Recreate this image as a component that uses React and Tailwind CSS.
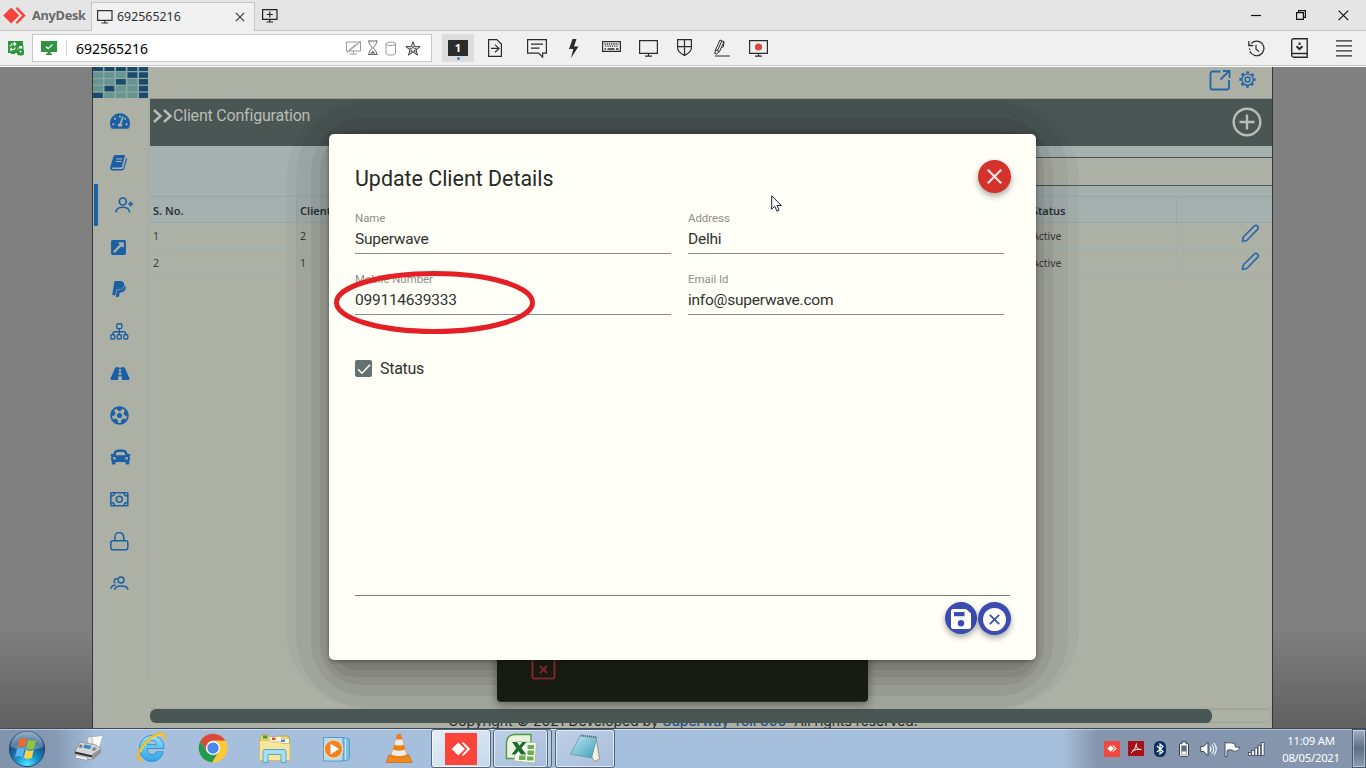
import React from "react";
import {
  FaTachometerAlt,
  FaPaypal,
  FaFutbol,
  FaRoad,
  FaCar,
  FaExternalLinkSquareAlt,
} from "react-icons/fa";

/* ---------- generic helpers ---------- */

function Line({ w = 20, h = 20, sw = 1.2, className = "", children, box }) {
  return (
    <svg
      width={w}
      height={h}
      viewBox={box || `0 0 ${w} ${h}`}
      fill="none"
      stroke="currentColor"
      strokeWidth={sw}
      className={"block shrink-0 " + className}
    >
      {children}
    </svg>
  );
}

function AnyMark({ w, h, className = "" }) {
  return (
    <svg width={w} height={h} viewBox="0 0 24 18" className={"block shrink-0 " + className} fill="currentColor">
      <path d="M8.5 .5 17 9l-8.500 8.500L0 9z" />
      <path d="M13.200 1.600 14.800 0 23.800 9l-9 9-1.600-1.600L20 9z" />
    </svg>
  );
}

/* ---------- title bar ---------- */

function TitleBar() {
  return (
    <div className="flex h-[31px] shrink-0 border-b border-[#c6c6c6] bg-[#e5e5e5] font-['Noto_Sans',sans-serif]">
      <div className="flex w-[91px] shrink-0 items-center pl-[3px]">
        <AnyMark w={23} h={17} className="text-[#f6423a]" />
        <span className="ml-[6px] whitespace-nowrap pt-[2px] text-[12.800px] font-bold tracking-[-0.3px] text-[#6a6a6a]">AnyDesk</span>
      </div>
      <div className="flex h-[29px] w-[164px] shrink-0 translate-y-[2px] items-center border border-b-0 border-[#c6c6c6] bg-[#f0f0f0] pl-[5px] text-[#333]">
        <Line w={16} h={14} sw={1.2}>
          <path d="M.6.6h14.400v9.800H.6zM7.800 10.400v2.600M4.500 13h6.600" />
        </Line>
        <span className="ml-1 text-[12.400px]">692565216</span>
        <Line w={10} h={10} sw={1.1} className="ml-[54px]">
          <path d="M.8.800l8.400 8.400M9.200.8.800 9.200" />
        </Line>
      </div>
      <div className="flex w-[30px] items-center justify-center pt-[2px] text-[#222]">
        <Line w={16} h={14} sw={1.2}>
          <path d="M.6.6h14.400v9.800H.6zM7.800 10.400v2.600M4.500 13h6.600M7.800 2.500v6M4.800 5.500h6" />
        </Line>
      </div>
      <div className="flex flex-1 items-center justify-end pr-[17px] text-[#111]">
        <Line w={10} h={10} sw={1.2}>
          <path d="M0 5.500h10" />
        </Line>
        <Line w={10} h={10} sw={1.2} className="ml-[35px]">
          <path d="M.6 2.600h6.800v6.800H.6zM2.600 2.600V.6h6.800v6.800h-2" />
        </Line>
        <Line w={11} h={11} sw={1.2} className="ml-[32px]">
          <path d="M.6.600l9.600 9.600M10.200.6.600 10.200" />
        </Line>
      </div>
    </div>
  );
}

/* ---------- toolbar ---------- */

function AddressBox() {
  return (
    <div className="ml-[8px] flex h-7 w-[400px] shrink-0 items-center border border-[#c9c9c9] bg-white pl-2">
      <svg width="16" height="14" viewBox="0 0 16 14" className="block">
        <path fill="#2f9340" d="M0 0h16v11H9.500v1.500H11V14H5v-1.500h1.500V11H0z" />
        <path d="M5 5.500l2.200 2.200L11.500 3.500" fill="none" stroke="#fff" strokeWidth="1.200" />
      </svg>
      <div className="ml-[9px] h-4 w-px bg-[#d0d0d0]" />
      <span className="ml-[9px] text-[14px] tracking-[-0.02px] text-black">692565216</span>
      <div className="ml-auto flex items-center pr-[10px] text-[#999]">
        <Line w={16} h={14} sw={1}>
          <path d="M.5 1h14v9H.5zM7.500 10v2.500M4 13h7M1 11.500 15 .5M3 9l8-6.500" />
        </Line>
        <Line w={12} h={16} sw={1} className="ml-[5px] text-[#666]">
          <path d="M1 1h9.600M1 14.500h9.600M2 1C2 5.500 5 6 5 7.800s-3 2-3 6.700M9.600 1C9.600 5.500 6.600 6 6.600 7.800s3 2 3 6.700" />
          <path d="M3 13.500h5.600l-2.800-2.500z" fill="currentColor" stroke="none" />
        </Line>
        <Line w={12} h={15} sw={1} className="ml-[6px]">
          <path d="M1 2.800v9.500c0 2.400 9.500 2.400 9.500 0V2.800M1 2.800c0-2.400 9.500-2.400 9.500 0s-9.500 2.400-9.500 0z" />
        </Line>
        <Line w={16} h={15} sw={1} className="ml-[8px] text-[#333]">
          <path d="M8 .8l1.800 4.900h5.300l-4.200 3.200 1.600 5.200L8 10.900l-4.500 3.200 1.600-5.200L.9 5.700h5.300z" />
          <path d="M8 5l.9 2.400h2.400L9.400 9l.8 2.300L8 9.800l-2.200 1.500.8-2.300-1.900-1.600h2.400z" strokeWidth=".7" />
        </Line>
      </div>
    </div>
  );
}

function Toolbar() {
  const slot = "flex shrink-0 items-center justify-center ";
  return (
    <div className="flex h-[35px] shrink-0 items-center border-b border-[#c6c6c6] bg-[#f0f0f0] font-['Noto_Sans',sans-serif] text-[#2b2b2b]">
      <svg width="16" height="15" viewBox="0 0 16 15" className="ml-2 block shrink-0">
        <path fill="#2f9340" d="M0 0h15v5h-3.500L9 7.500V12H7v1H3v-1H0z" />
        <path d="M2 5.500 4 3h3.500M6 1.200 7.800 3 6 4.800M7.500 6.500 6 8.500H2.500M4 6.800 2.300 8.500 4 10.200" fill="none" stroke="#fff" strokeWidth="1.100" />
        <path d="M10 8V6.500a2.500 2.500 0 0 1 5 0V8" fill="none" stroke="#2f9340" strokeWidth="1.200" />
        <rect x="9" y="7.500" width="7" height="7" rx="2.500" fill="#2f9340" />
        <circle cx="12.500" cy="10.500" r="1" fill="#fff" />
      </svg>
      <AddressBox />
      <div className="ml-[10px] flex h-7 w-8 shrink-0 flex-col items-center bg-[#dcdcdc] pt-[6px]">
        <div className="flex h-4 w-5 items-center justify-center bg-[#2b2b2b] text-[11px] font-bold text-white">1</div>
        <div className="mt-[1px] size-[3px] rounded-full bg-[#3c83c8]" />
      </div>
      <div className={slot + "ml-[2px] w-[38px]"}>
        <Line w={14} h={18} sw={1.200}>
          <path d="M.6.6h8.200L13.400 5v12.400H.6zM3 9.400h7.600M7 5.600l4 3.800-4 3.800" />
        </Line>
      </div>
      <div className={slot + "w-[46px]"}>
        <Line w={20} h={19} sw={1.200}>
          <path d="M.6.6h18.800v13.600h-3.800v4l-4-4H.6zM4 5.200h12M4 9.200h8.500" />
        </Line>
      </div>
      <div className={slot + "w-[28px]"}>
        <svg width="10" height="19" viewBox="0 0 10 19" className="block" fill="currentColor">
          <path d="M3.500 0H7.500L5 7.500H9.500L2 19 4.300 10H0z" />
        </svg>
      </div>
      <div className={slot + "w-[46px] pb-[3px]"}>
        <Line w={19} h={11} sw={1.200}>
          <path d="M.6.6h17.800v9.800H.6z" />
          <path d="M2.500 3h14M3.300 5.200h13" strokeDasharray="1.200 1" strokeWidth="1.300" />
          <path d="M2.500 8h1.500M5.500 8h7M14 8h2.500" strokeWidth="1.300" />
        </Line>
      </div>
      <div className={slot + "w-[28px]"}>
        <Line w={19} h={17} sw={1.200}>
          <path d="M.6.6h17.800v12.800H.6zM9.500 13.400v2.800M6 16.200h7" />
        </Line>
      </div>
      <div className={slot + "w-[44px] pb-[1px]"}>
        <Line w={15} h={17} sw={1.200}>
          <path d="M.6.600h13.800v8.400c0 4-4.500 6.200-6.900 7.400C5.100 15.200.6 13 .6 9zM7.500.6v15.400M.6 7.600h13.800" />
        </Line>
      </div>
      <div className={slot + "w-[32px]"}>
        <Line w={16} h={18} sw={1}>
          <path d="M.8 14.500 1.500 11 6 1l4 1.800L5.500 12.500 2.500 15zM1.500 11l4 1.500M7.800 2 3.500 11.500M10 2.800l-.6 5-1 .8M1 17h15" />
        </Line>
      </div>
      <div className={slot + "w-[40px]"}>
        <Line w={19} h={17} sw={1.200}>
          <path d="M.6.6h17.800v12.800H.6zM9.500 13.400v2.800M6 16.200h7" />
          <circle cx="9.500" cy="7" r="3.600" fill="#d9483f" stroke="none" />
        </Line>
      </div>
      <div className="ml-auto flex items-center pr-[14px]">
        <Line w={17} h={17} sw={1.200}>
          <path d="M3.500 3.200A7.300 7.300 0 1 1 2 11.500" />
          <path d="M.8 1v4.600h4.600M8 4.800v4.400l3 2.300" />
          <path d="M1.200 5.600 3.500 3.200M1.400 8.500 2 11.500" strokeDasharray="1.500 1.200" />
        </Line>
        <Line w={17} h={20} sw={1.400} className="ml-[26px]">
          <path d="M2.700.7h13.500v18.500H2.700a2 2 0 0 1-2-2V2.700a2 2 0 0 1 2-2zM1 15.500h15.200" />
          <path d="M8.500 4.500v2.500M5.500 8.300l3 2.800 3-2.800" strokeWidth="2" />
        </Line>
        <Line w={16} h={17} sw={1.100} className="ml-[28px]">
          <path d="M0 .9h16M0 5.900h16M0 10.900h16M0 15.900h16" />
        </Line>
      </div>
    </div>
  );
}

/* ---------- remote page: sidebar ---------- */

function Logo() {
  const rows = ["ddddd", "tttdd", "ttdtd", "tdttd", "dtttd"];
  return (
    <svg width="55" height="31" viewBox="0 0 55 31" className="mb-px block shrink-0">
      <rect width="55" height="31" fill="#8fa5a0" />
      {rows.map((r, y) =>
        r.split("").map((c, x) => (
          <rect
            key={x + "-" + y}
            x={x * 11.500}
            y={y === 0 ? 0 : 5.300 + (y - 1) * 6.800}
            width={9.800}
            height={y === 0 ? 4 : 5.500}
            fill={c === "d" ? "#184a6e" : "#669490"}
          />
        ))
      )}
    </svg>
  );
}

const sideIcons = [
  <FaTachometerAlt key="a" className="block h-[18px] w-[20px]" />,
  <svg key="b" width="18" height="16" viewBox="0 0 18 16" className="block">
    <path fill="currentColor" d="M5.500 0H14c.8 0 1.100.6.900 1.300L12 11.500c-.2.700-.8 1.100-1.500 1.100H3c-1.200 0-1.200 1.500 0 1.500h8.800c.9 0 1.300-.3 1.500-1L16 3c.8.400 1.100 1 .9 1.800l-2.700 9c-.3 1-1.200 1.700-2.300 1.700H2.700C.8 15.500-.3 13.700.3 12L3.200 2C3.600.8 4.300 0 5.500 0z" />
    <path d="M6.500 4h6M5.800 6.500h6" stroke="#adb0a5" strokeWidth="1.100" />
  </svg>,
  <Line key="c" w={19} h={16} sw={1.700}>
    <circle cx="7.800" cy="4.500" r="3.500" />
    <path d="M.9 15.500c.6-7 13.200-7 13.800 0M15.600 4.500v5M13.100 7h5" />
  </Line>,
  <FaExternalLinkSquareAlt key="d" className="block size-[17px]" />,
  <FaPaypal key="e" className="block size-[18px]" />,
  <Line key="f" w={19} h={17} sw={1.400}>
    <rect x="6.800" y=".8" width="5" height="4.800" rx="1" />
    <rect x=".8" y="11.700" width="4" height="4.300" rx="1" />
    <rect x="7.300" y="11.700" width="4" height="4.300" rx="1" />
    <rect x="13.800" y="11.700" width="4" height="4.300" rx="1" />
    <path d="M9.300 5.600v6M2.800 11.700c0-2.500.6-3 2-3h9c1.400 0 2 .5 2 3" />
  </Line>,
  <FaRoad key="g" className="block h-[17px] w-[20px]" />,
  <FaFutbol key="h" className="block size-[19px]" />,
  <FaCar key="i" className="block h-[20px] w-[21px]" />,
  <Line key="j" w={19} h={15} sw={1.500}>
    <rect x=".8" y=".8" width="17" height="13" rx=".8" />
    <circle cx="9.300" cy="7.300" r="3" />
    <path d="M4.500 1c0 2-1.500 3-3.500 3M14 1c0 2 1.500 3 3.500 3M4.500 13.600c0-2-1.500-3-3.500-3M14 13.600c0-2 1.500-3 3.500-3" />
  </Line>,
  <Line key="k" w={19} h={19} sw={1.500}>
    <rect x=".8" y="8.800" width="17" height="9" rx="2" />
    <path d="M4.900 8.800V5a4.400 4.400 0 0 1 8.800 0v3.800" />
  </Line>,
  <Line key="l" w={19} h={15} sw={1.500}>
    <circle cx="11" cy="4" r="3" />
    <path d="M4.600 13.800c.6-5 12.800-5 13.400 0M7 3C4.500 1.800 2.800 6 5.500 7M5.500 9C2.800 9.300 1.200 10.500.8 12.800" />
  </Line>,
];

function Sidebar() {
  return (
    <div className="flex w-[57px] shrink-0 flex-col">
      <Logo />
      <div className="flex h-[579px] w-[56px] flex-col border-r border-[#a0aba7] pt-[1px] text-[#1b60a4]">
        {sideIcons.map((icon, i) => (
          <div
            key={i}
            className={
              "flex h-[42.050px] shrink-0 items-center " +
              (i === 2 ? "ml-px border-l-4 border-[#1c63a5] pl-[17px]" : "pl-[17px]")
            }
          >
            {icon}
          </div>
        ))}
      </div>
    </div>
  );
}

/* ---------- remote page: table ---------- */

function Pencil() {
  return (
    <Line w={19} h={19} sw={1.700} className="text-[#2c6aa8]">
      <path d="M1.500 17.500l.8-4.500L13.200 2.200c2.400-2 5.200.7 3.300 3.200L5.800 16.500z" strokeLinejoin="round" />
    </Line>
  );
}

function Row({ a, b }) {
  return (
    <div className="flex h-[27.500px] shrink-0 border-b border-[#a0b0b1] text-[#3a3c3e]">
      <div className="flex w-[146px] items-center pl-[3px] pt-[2px]">{a}</div>
      <div className="flex w-[736px] items-center border-l border-[#a0b0b1] pl-[3px] pt-[2px]">{b}</div>
      <div className="flex w-[145px] items-center border-r border-[#a0b0b1] pt-[2px]">Active</div>
      <div className="flex flex-1 items-center justify-end pr-[12px] pb-[4px]">
        <Pencil />
      </div>
    </div>
  );
}

function Page() {
  return (
    <div className="flex w-[1181px] shrink-0 overflow-hidden border-x border-[#33363a] bg-[#adb0a5]">
      <Sidebar />
      <div className="flex min-w-0 flex-1 flex-col">
        <div className="flex h-[32px] shrink-0 items-start justify-end border-b border-[#8f9a93] pr-[16px] pt-[3px] text-[#2566a8]">
          <Line w={22} h={21} sw={1.800}>
            <path d="M11.500 1.500h-8a2 2 0 0 0-2 2v14a2 2 0 0 0 2 2h14.500a2 2 0 0 0 2-2V10M11.500 9.500 20 1.200M14 1h6.500v7" />
          </Line>
          <svg width="17" height="17" viewBox="-12 -12 24 24" fill="none" stroke="currentColor" className="ml-[8px] mt-[1px] block shrink-0">
            <circle r="3.400" strokeWidth="2.200" />
            <circle r="8" strokeWidth="2" />
            <circle r="10" strokeWidth="3" strokeDasharray="3.900 3.954" strokeDashoffset="1.950" />
          </svg>
        </div>
        <div className="flex h-[47px] shrink-0 items-start justify-between bg-[#4a5653] pr-[10px] font-['Roboto',sans-serif] text-[#b9bdb6]">
          <div className="flex items-center pl-[3px] pt-[4px]">
            <Line w={20} h={14} sw={2.500}>
              <path d="M1 1l6.500 6L1 13M11 1l6.500 6-6.500 6" />
            </Line>
            <span className="whitespace-nowrap text-[16px] leading-[25px] tracking-[-0.2px]">Client Configuration</span>
          </div>
          <Line w={30} h={30} sw={2.400} className="mt-[8px]">
            <circle cx="15" cy="15" r="13.300" />
            <path d="M15 7.500v15M7.500 15h15" />
          </Line>
        </div>
        <div className="flex h-[50px] shrink-0 items-start justify-end bg-[#a5b1af] pt-[11px]">
          <div className="h-[29px] w-[400px] border-y border-[#4b5654] bg-[#adb0a5]" />
        </div>
        <div className="font-['Noto_Sans',sans-serif] text-[10.500px]">
          <div className="flex h-[26.500px] border-y border-[#98a8a8] bg-[#a5b1af] text-[11px] font-semibold text-[#2d3337]">
            <div className="flex w-[146px] items-center pl-[3px] pt-[3px]">S. No.</div>
            <div className="flex w-[736px] items-center border-l border-[#98a8a8] pl-[3px] pt-[3px]">Client Id</div>
            <div className="flex w-[145px] items-center border-r border-[#98a8a8] pt-[3px] tracking-[-0.1px]">Status</div>
          </div>
          <Row a="1" b="2" />
          <Row a="2" b="1" />
        </div>
        <div className="relative mt-auto h-[20px] shrink-0 border-t border-[#a2a69b]">
          <div className="absolute left-[298px] top-[1px] whitespace-nowrap font-['Inter',sans-serif] text-[13.900px] leading-[22px] text-[#25282b]">
            Copyright © 2021 Developed by <span className="font-medium text-[#24508f]">Superway Toll 360</span>
            &nbsp; All rights reserved.
          </div>
          <div className="relative h-[14px] rounded-full border border-[#a0a497] bg-[#adb0a5]">
            <div className="-ml-px -mt-px h-[14px] w-[1062px] rounded-[6px] bg-[#4a5653]" />
          </div>
        </div>
      </div>
    </div>
  );
}

/* ---------- modal ---------- */

function Field({ label, value }) {
  return (
    <div className="flex h-[61px] w-[316px] flex-col">
      <span className="translate-y-px text-[11.400px] leading-[16px] text-[#8c8f87]">{label}</span>
      <div className="flex h-[29px] items-center border-b border-[#8b8d87] pt-[2px] text-[15.500px] tracking-[-0.24px] text-[#30332f]">{value}</div>
    </div>
  );
}

function Modal() {
  return (
    <>
      <div className="absolute left-[286px] top-[99px] h-[610px] w-[793px] rounded-[80px] bg-black/[0.025]" />
      <div className="absolute left-[296px] top-[103px] h-[605px] w-[772px] rounded-[72px] bg-black/[0.04]" />
      <div className="absolute left-[311px] top-[118px] h-[578px] w-[742px] rounded-[54px] bg-black/[0.055]" />
      <div className="absolute left-[320px] top-[130px] h-[555px] w-[724px] rounded-[40px] bg-black/[0.06]" />
      <div className="absolute left-[329px] top-[150px] h-[527px] w-[707px] rounded-[24px] bg-black/[0.06]" />
      <div className="absolute left-[335px] top-[150px] h-[520px] w-[695px] rounded-[20px] bg-black/[0.07]" />
      <div className="absolute left-[497px] top-[640px] flex h-[62px] w-[371px] items-end rounded-[4px] border-b border-[#2b2e25] bg-[#181b12] pb-[21px] pl-[34px] shadow-[0_2px_8px_1px_rgba(0,0,0,0.35)]">
        <Line w={25} h={20} sw={2} className="text-[#7a2733]">
          <rect x="1.500" y="-2" width="22" height="20.500" rx="1.500" />
          <path d="M9 6l7 7M16 6l-7 7" />
        </Line>
      </div>
      <div className="absolute left-[329px] top-[134px] flex h-[526px] w-[707px] flex-col rounded-[5px] bg-[#fffff8] px-[26px] font-['Roboto',sans-serif] shadow-[0_1px_4px_rgba(0,0,0,0.4)]">
        <div className="flex h-[75px] shrink-0 items-start justify-between pt-[26px]">
          <h1 className="text-[21.400px] leading-[37px] text-[#262925]">Update Client Details</h1>
          <div className="-mr-px flex size-[33px] items-center justify-center rounded-full bg-[#d4322c] text-[#fbe3df] shadow-[0_3px_6px_rgba(0,0,0,0.35)]">
            <Line w={15} h={15} sw={2.200}>
              <path d="M.8.8l13.400 13.400M14.200.8.8 14.200" />
            </Line>
          </div>
        </div>
        <div className="grid grid-cols-[316px_316px] gap-x-[17px]">
          <Field label="Name" value="Superwave" />
          <Field label="Address" value="Delhi" />
          <Field label="Mobile Number" value="099114639333" />
          <Field label="Email Id" value="info@superwave.com" />
        </div>
        <div className="mt-[25px] flex h-[26px] items-center">
          <div className="mb-px flex size-[17px] items-center justify-center rounded-[2px] bg-[#657170] text-[#fffff8]">
            <Line w={14} h={12} sw={1.600}>
              <path d="M1 6.200l4 4L13 1.800" />
            </Line>
          </div>
          <span className="ml-2 text-[16px] tracking-[-0.3px] text-[#30332f]">Status</span>
        </div>
        <div className="mt-[213px] flex items-start justify-end gap-[1px] border-t border-[#7d7f7b] pt-[6px]">
          <div className="flex size-[32px] items-center justify-center rounded-full bg-[#3b4baf] shadow-[0_3px_6px_rgba(0,0,0,0.35)]">
            <svg width="22" height="22" viewBox="0 0 22 22" className="block translate-y-[1px]">
              <path fill="#fffff8" fillRule="evenodd" d="M3 1h13l5 4.500V19a2 2 0 0 1-2 2H3a2 2 0 0 1-2-2V3a2 2 0 0 1 2-2zM4 4v4.200h10.500V4zM11 12a3.200 3.200 0 1 0 0 6.400 3.200 3.200 0 0 0 0-6.400z" />
            </svg>
          </div>
          <div className="-mr-px flex size-[33px] items-center justify-center rounded-full bg-[#3b4baf] text-[#3b4baf] shadow-[0_3px_6px_rgba(0,0,0,0.35)]">
            <div className="flex size-[23px] translate-y-[1px] items-center justify-center rounded-full bg-[#fffff8]">
              <Line w={11} h={11} sw={1.700}>
                <path d="M.8.8l9.400 9.400M10.200.8.8 10.200" />
              </Line>
            </div>
          </div>
        </div>
      </div>
      <svg width="202" height="65" viewBox="0 0 202 65" className="absolute left-[334px] top-[270px]" fill="none">
        <ellipse cx="100.500" cy="32.500" rx="98" ry="29" stroke="#e41f26" strokeWidth="5" />
      </svg>
      <svg width="11" height="17" viewBox="0 0 11 17" className="absolute left-[771px] top-[195px]">
        <path d="M.7.800v13.400l3.100-2.900 2.100 4.800 2.200-1-2.100-4.600h4.300z" fill="#fff" stroke="#201f35" strokeWidth="1" />
      </svg>
    </>
  );
}

/* ---------- taskbar ---------- */

function Orb() {
  return (
    <svg width="38" height="38" viewBox="0 0 38 38" className="block">
      <defs>
        <radialGradient id="orb" cx=".5" cy=".95" r=".95">
          <stop offset="0" stopColor="#4fe6ff" />
          <stop offset=".35" stopColor="#1590c8" />
          <stop offset=".7" stopColor="#1a4f80" />
          <stop offset="1" stopColor="#6f97b8" />
        </radialGradient>
      </defs>
      <circle cx="19" cy="19" r="17.600" fill="url(#orb)" stroke="#26476a" strokeWidth="1" />
      <path d="M3 17A16 16 0 0 1 35 17C25 21 13 21 3 17z" fill="#fff" opacity=".28" />
      <path d="M11.500 9.200c3-1.700 5.300-1.200 7.500 0l-2 8.300c-2.400-1.400-4.700-1.500-7.600 0z" fill="#ee6a2c" />
      <path d="M20.200 9.700c2.600 1.400 5.200 1.500 8 .2l-2 8.200c-2.800 1.500-5.300 1.300-8 0z" fill="#8fc640" />
      <path d="M9 19c3-1.600 5.300-1.200 7.500.1l-2 8c-2.300-1.300-4.600-1.400-7.500 0z" fill="#5bb4ee" />
      <path d="M17.800 19.700c2.600 1.300 5 1.500 8 .1l-2 8c-2.900 1.400-5.500 1.200-8 0z" fill="#fdd243" />
    </svg>
  );
}

function Fax() {
  return (
    <svg width="32" height="28" viewBox="0 0 32 28" className="block">
      <path d="M17 3 30 1.500 26 15 14 13z" fill="#fafafa" stroke="#9d9d9d" strokeWidth=".6" />
      <path d="M7 8l16 3 4.500 3v5L19 26 2 22V17.500z" fill="#d3d7da" stroke="#777" strokeWidth=".6" />
      <path d="M19 20.500l8.500-6v4.500L19 26z" fill="#8d9398" />
      <path d="M2 17.500l17 3.700v2.300L2 19.800z" fill="#333" />
      <path d="M3 21l12 2.700-1 2.600-12-2.600z" fill="#f8f8f8" stroke="#777" strokeWidth=".5" />
      <path d="M11.500 10.500l7 1.300-1.500 3.500-7-1.600z" fill="#3d86c6" />
      <path d="M14.500 3.500l4-1.500 1.500 8-6-1z" fill="#e6e6e6" stroke="#888" strokeWidth=".5" />
      <path d="M7 10.500l2.500.6-1.200 3-2.500-.8z" fill="#6d7378" />
      <path d="M20.500 12.700l3.500 1.500-2.300 3-3.200-1z" fill="#8b9095" />
    </svg>
  );
}

function IE() {
  return (
    <svg width="32" height="32" viewBox="0 0 32 32" className="block">
      <defs>
        <linearGradient id="ie" x1="0" y1="0" x2="0" y2="1">
          <stop offset="0" stopColor="#8fe0fb" />
          <stop offset="1" stopColor="#2fa4e4" />
        </linearGradient>
      </defs>
      <path
        d="M29 17.500H12.200c.2 4 2.200 6 5 6 2 0 3.500-1 4.200-2.700h6.900C27 26.800 22.500 30.500 17 30.500 9.800 30.500 4.500 25 4.500 17.300S10 4.500 17 4.500s12.200 5.500 12 13zM12.300 13.700h9.200c-.2-2.900-1.900-4.400-4.500-4.400s-4.300 1.600-4.700 4.400z"
        fill="url(#ie)"
        stroke="#2c88c9"
        strokeWidth=".8"
      />
      <path d="M29.500 8.500c.8-3.200 0-5.500-2.500-5.800C20 1.800 8 12 4 21.500c-2 5-.8 8.500 3.500 7.200" fill="none" stroke="#e9bd24" strokeWidth="2.600" />
      <path d="M28.500 5c-3-4-17 4-23 16" fill="none" stroke="#fbe37a" strokeWidth=".9" />
    </svg>
  );
}

function ChromeIcon() {
  return (
    <svg width="30" height="30" viewBox="0 0 48 48" className="block">
      <circle cx="24" cy="24" r="23" fill="#fbc938" />
      <path d="M24 24 14 29.800 4.100 12.500A23 23 0 0 0 22.500 47L32.500 29.800z" fill="#219a55" />
      <path d="M24 24V12.500h19.900A23 23 0 0 0 4.100 12.500L14 29.800z" fill="#d94a3d" />
      <path d="M34 29.800 24 47a23 23 0 0 0 19.900-34.500H24z" fill="#fbc938" />
      <circle cx="24" cy="24" r="11.500" fill="#f5f5f5" />
      <circle cx="24" cy="24" r="9" fill="#4688ec" />
    </svg>
  );
}

function Explorer() {
  return (
    <svg width="34" height="31" viewBox="0 0 34 31" className="block">
      <path d="M2 4 4 2h7l1.500 2H18l1.500-1H30l1.500 3v21H2z" fill="#ecd376" stroke="#c2a247" strokeWidth=".8" />
      <path d="M5 2.500h4.500v3H5z" fill="#3d9e3e" />
      <path d="M12 4h11v5H12zM22 6h9v4h-9z" fill="#f6f4ea" />
      <path d="M14 4.500h3.500v2.500H14z" fill="#d7502d" />
      <path d="M23 6.500h4v2.500h-4z" fill="#4a90d4" />
      <path d="M1.500 7.500h9.500l1.500 1.500H22l1.500 1.500H32v17H1.500z" fill="#f6e69c" stroke="#d2b65a" strokeWidth=".8" />
      <path d="M5 29.500v-11a2 2 0 0 1 2-2h19a2 2 0 0 1 2 2v11h-5v-8H10v8z" fill="#a9def2" stroke="#5ba7cb" strokeWidth="1" />
    </svg>
  );
}

function Player() {
  return (
    <svg width="30" height="28" viewBox="0 0 30 28" className="block">
      <path d="M6 3h18.500l3 2v18L25 25.500H6z" fill="#7cc0e6" stroke="#3c86b8" strokeWidth=".7" />
      <path d="M1.500 2.500h19.500V26H1.500z" fill="#b3dcf2" stroke="#4890be" strokeWidth=".8" />
      <path d="M23.500 3.500v22" stroke="#d5eefa" />
      <circle cx="11.500" cy="14" r="9.200" fill="#f08224" stroke="#f7d7ae" strokeWidth="1.300" />
      <path d="M8.500 8.500v11l8.500-5.500z" fill="#fff" />
    </svg>
  );
}

function Cone() {
  return (
    <svg width="28" height="31" viewBox="0 0 28 31" className="block">
      <path d="M4 22h20l3 7.500H1z" fill="#ee8a1e" stroke="#c8670e" strokeWidth=".7" />
      <path d="M12 1.500c1-1 3-1 4 0L22.500 24c-3 2.500-14 2.500-17 0z" fill="#ee8012" />
      <path d="M10.800 6.500h6.400l1.500 5.200c-2 1-7.400 1-9.400 0zM8 16.500c3 1.500 9 1.500 12 0l1.500 5c-4 2-11 2-15 0z" fill="#ececec" />
    </svg>
  );
}

function Excel() {
  return (
    <svg width="32" height="31" viewBox="0 0 32 31" className="block">
      <path d="M9 1.500h17v24H1.500V9C2 4.500 4.500 2 9 1.500z" fill="#e9f4e0" stroke="#4f9a3d" strokeWidth="1.400" />
      <path d="M11 8.500l20.500 1L30 30 9 28z" fill="#f7fbf3" stroke="#9cbd8d" strokeWidth=".8" />
      <path d="M22.500 12h6.500v4h-6.500zM22.500 17.500H29v4.500h-6.500zM22 23.500h6.500v4H22zM14 22.500h6.500v4.500H14z" fill="#6eae50" />
      <path d="M7 9h5l2.500 3.500L17.500 9h4l-5 6 4.800 6.500H16l-2.500-3.600-3 3.600H6.500l5-6.200z" fill="#1f6b2e" />
    </svg>
  );
}

function Notepad() {
  return (
    <svg width="32" height="31" viewBox="0 0 32 31" className="block">
      <defs>
        <linearGradient id="np" x1="0" y1="0" x2="1" y2="1">
          <stop offset="0" stopColor="#c5eaf2" />
          <stop offset="1" stopColor="#3c9dba" />
        </linearGradient>
      </defs>
      <path d="M27 4l3.500 22-5 2.500-3-5z" fill="#f3f0e2" stroke="#8a8873" strokeWidth=".8" />
      <path d="M11.500 2.500 28 4.500l-5.500 20.500L1.500 21z" fill="url(#np)" stroke="#5393a6" strokeWidth=".7" />
      <path d="M12 2.500 28 4.300" stroke="#667" strokeWidth="2" strokeDasharray="1 1" />
    </svg>
  );
}

function TaskButton({ children, active, className }) {
  return (
    <div
      className={
        "flex h-[39px] items-center justify-center rounded-[3px] border border-[#52637c] shadow-[inset_0_0_0_1px_rgba(255,255,255,0.65)] " +
        (active ? "bg-linear-to-br from-[#e6eef8] to-[#c6d7ec] " : "bg-linear-to-br from-[#bfd0e8] to-[#a9bedb] ") +
        className
      }
    >
      {children}
    </div>
  );
}

function Tray() {
  return (
    <div className="ml-auto flex items-center text-white">
      <div className="flex w-6 justify-center">
        <div className="flex size-4 items-center justify-center bg-[#f24840]">
          <AnyMark w={10} h={7} />
        </div>
      </div>
      <div className="flex w-6 justify-center">
        <svg width="16" height="15" viewBox="0 0 16 15" className="block">
          <rect width="16" height="15" fill="#a81217" />
          <path d="M3 12c3-2 5-6 5.500-9.500M8 4c0 3 3 5 5.500 4.500M4 10c3-1.500 6-2 9-1.500" stroke="#fff" strokeWidth="1" fill="none" />
        </svg>
      </div>
      <div className="flex w-6 justify-center">
        <svg width="12" height="16" viewBox="0 0 12 16" className="block">
          <rect width="12" height="16" rx="5.500" fill="#0e3160" />
          <path d="M3 5l6 5.500L6 13V3l3 2.500L3 11" stroke="#fff" strokeWidth="1.200" fill="none" />
        </svg>
      </div>
      <div className="flex w-6 justify-center">
        <svg width="12" height="16" viewBox="0 0 12 16" className="block">
          <path d="M4 .7h4v2h1.500c.6 0 1 .4 1 1v10.600c0 .6-.4 1-1 1h-7c-.6 0-1-.4-1-1V3.700c0-.6.4-1 1-1H4z" fill="#fff" stroke="#333d4b" strokeWidth="1" />
          <path d="M3.300 4.500h5.400v9H3.300z" fill="#5c6b80" />
          <path d="M4 10.500h4v2.500H4z" fill="#fff" />
        </svg>
      </div>
      <div className="flex w-6 justify-center">
        <svg width="17" height="16" viewBox="0 0 17 16" className="block">
          <path d="M.7 5.500h3L8 1.200v13.600l-4.300-4.300h-3z" fill="#fff" stroke="#3a4555" strokeWidth="1" />
          <path d="M10 5.500c1.200 1.500 1.200 3.500 0 5M12 3.500c2.200 2.600 2.200 6.400 0 9M14 2c3 3.500 3 8.500 0 12" stroke="#fff" strokeWidth="1.100" fill="none" />
        </svg>
      </div>
      <div className="flex w-6 justify-center">
        <svg width="17" height="16" viewBox="0 0 17 16" className="block">
          <path d="M1 1v14.500h2V9.500c2-1 4-1 6 0 2 1.500 5 1 7-3.500-2 .6-3.500.5-5-.5V3c-2-1-5-1.500-8-1z" fill="#fff" stroke="#3a4555" strokeWidth=".9" />
        </svg>
      </div>
      <div className="flex w-6 justify-center">
        <svg width="17" height="14" viewBox="0 0 17 14" className="block">
          <g fill="#fff" stroke="#3a4555" strokeWidth=".8">
            <rect x=".5" y="10.500" width="2.600" height="3" />
            <rect x="3.700" y="8.500" width="2.600" height="5" />
            <rect x="6.900" y="6" width="2.600" height="7.500" />
            <rect x="10.100" y="3.300" width="2.600" height="10.200" />
            <rect x="13.300" y=".6" width="2.800" height="12.900" />
          </g>
        </svg>
      </div>
      <div className="ml-[12px] flex w-[62px] flex-col items-center whitespace-nowrap font-['Noto_Sans',sans-serif] text-[11.300px] leading-[17px] tracking-[-0.25px]">
        <span>11:09 AM</span>
        <span>08/05/2021</span>
      </div>
      <div className="ml-[10px] h-[39px] w-[14px] border border-[#4a5a70] bg-linear-to-b from-[#9fafc3] via-[#5e6f86] to-[#8c9db3] shadow-[inset_0_0_0_1px_rgba(255,255,255,0.4)]" />
    </div>
  );
}

function Taskbar() {
  const slot = "flex shrink-0 items-center justify-center ";
  return (
    <div className="flex h-10 shrink-0 items-center border-t border-[#3c4757] bg-[linear-gradient(90deg,#8094ae_0,#8699b3_55px,#a6bfdc_95px,#a6bfdc_1062px,#8495ad_1098px,#8495ad_100%)] shadow-[inset_0_1px_0_rgba(255,255,255,0.45)]">
      <div className={slot + "w-[54px]"}><Orb /></div>
      <div className={slot + "ml-[5px] w-[60px] pb-[2px]"}><Fax /></div>
      <div className={slot + "w-[63px] pb-[3px]"}><IE /></div>
      <div className={slot + "w-[62px] pb-[1px]"}><ChromeIcon /></div>
      <div className={slot + "w-[62px]"}><Explorer /></div>
      <div className={slot + "w-[61px]"}><Player /></div>
      <div className={slot + "w-[63px] pb-[1px]"}><Cone /></div>
      <TaskButton active className="ml-[1px] w-[60px]">
        <div className="flex size-8 items-center justify-center bg-[#fb443a] text-white">
          <AnyMark w={20} h={14} />
        </div>
      </TaskButton>
      <div className="ml-[2px] flex">
        <TaskButton className="z-10 w-[55px]"><Excel /></TaskButton>
        <div className="-ml-[2px] h-[39px] w-[6px] rounded-r-[3px] border border-[#52637c] bg-[#b8cae3]" />
      </div>
      <TaskButton className="ml-[3px] w-[60px]"><Notepad /></TaskButton>
      <Tray />
    </div>
  );
}

export default function App() {
  return (
    <div className="relative flex h-[768px] w-[1366px] flex-col overflow-hidden bg-white">
      <TitleBar />
      <Toolbar />
      <div className="mt-px flex min-h-0 flex-1 bg-[linear-gradient(180deg,#808080_0,#808080_560px,#606060_661px)] pl-[92px]">
        <Page />
      </div>
      <Taskbar />
      <Modal />
    </div>
  );
}
